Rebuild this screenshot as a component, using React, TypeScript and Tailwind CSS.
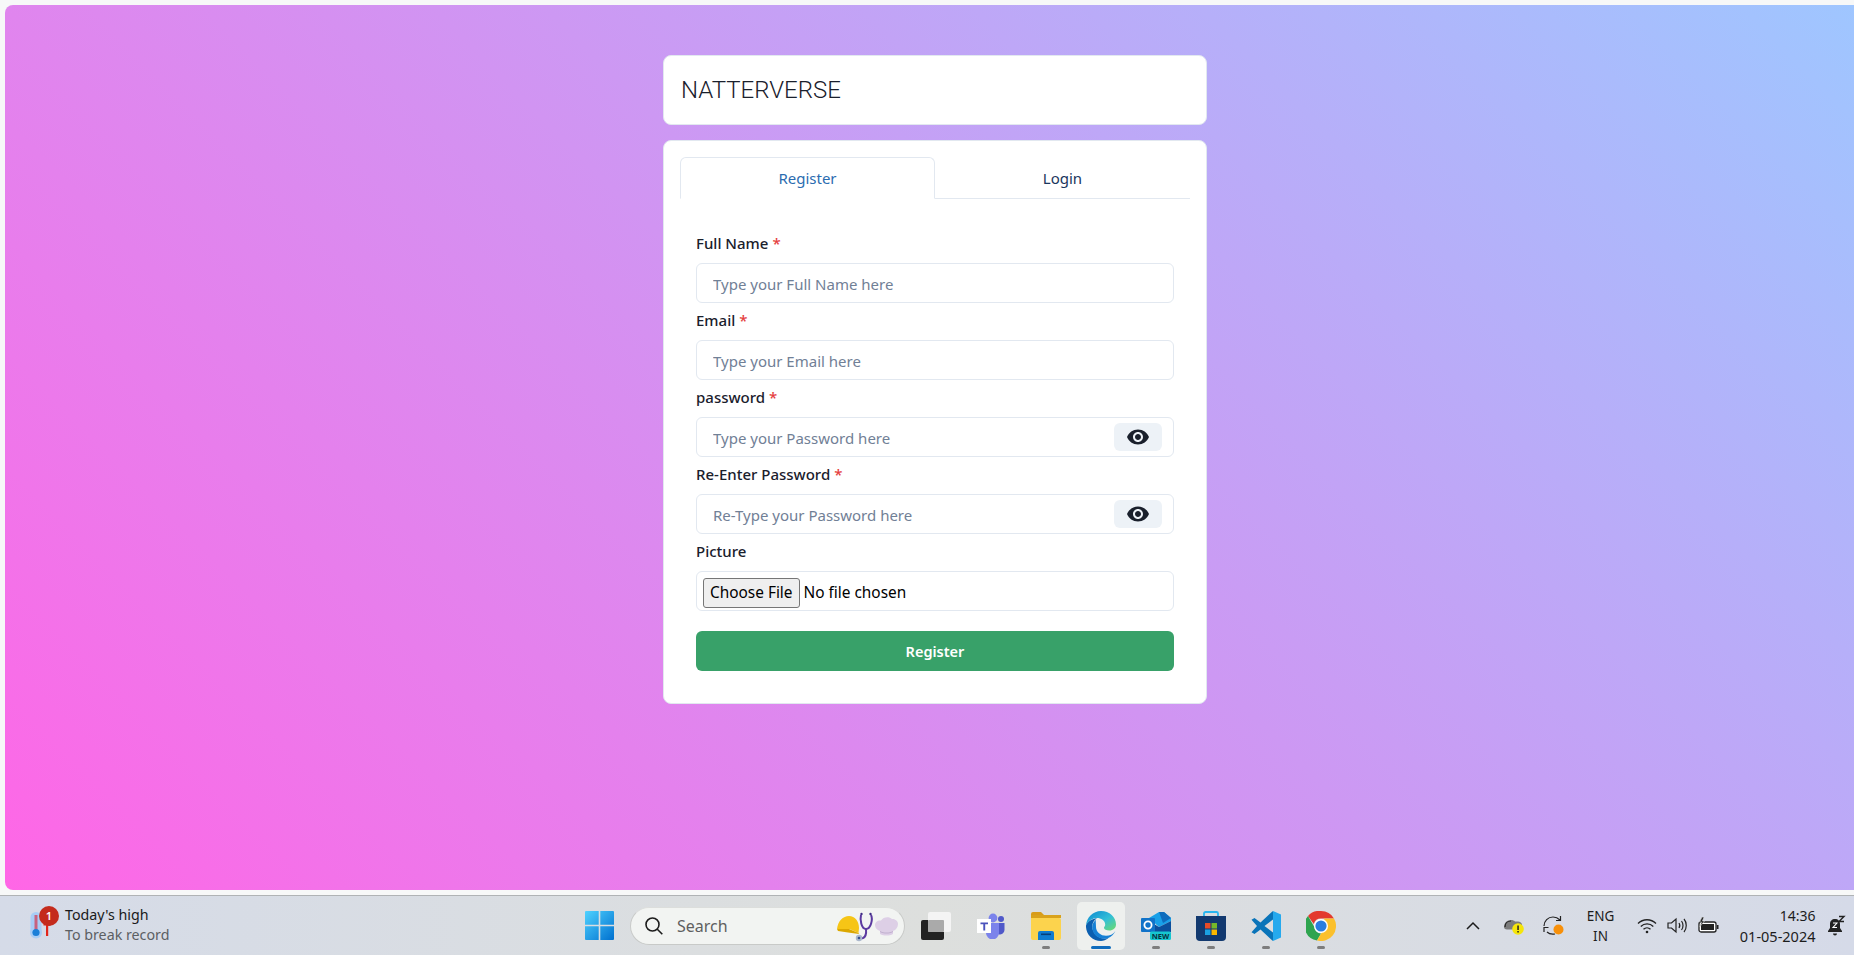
import React from "react";

const uiFont = { fontFamily: '"Noto Sans", sans-serif' };

function Field({
  label,
  required,
  placeholder,
  eye,
}: {
  label: string;
  required?: boolean;
  placeholder: string;
  eye?: boolean;
}) {
  return (
    <div className="w-full">
      <label className="block h-6 mb-2 text-[15px] leading-6 font-medium text-[#1a202c]">
        {label}
        {required && <span className="text-[#e53e3e] ml-1">*</span>}
      </label>
      <div className="relative h-10">
        <input
          placeholder={placeholder}
          className="w-full h-10 pl-4 pr-4 pt-[2px] text-[15px] border border-[#e2e8f0] rounded-md bg-white placeholder:text-[#718096] outline-none"
        />
        {eye && (
          <button className="absolute right-3 top-1.5 w-12 h-7 rounded-md bg-[#edf2f7] flex items-center justify-center">
            <svg width="24" height="24" viewBox="0 0 24 24" fill="#1a202c">
              <path d="M12 4.5C7 4.5 2.73 7.61 1 12c1.73 4.39 6 7.5 11 7.5s9.27-3.11 11-7.5c-1.73-4.39-6-7.5-11-7.5zM12 17c-2.76 0-5-2.24-5-5s2.24-5 5-5 5 2.24 5 5-2.24 5-5 5zm0-8c-1.66 0-3 1.34-3 3s1.34 3 3 3 3-1.34 3-3-1.34-3-3-3z" />
            </svg>
          </button>
        )}
      </div>
    </div>
  );
}

function WeatherIcon() {
  return (
    <div className="relative w-[30px] h-[36px]">
      <svg width="30" height="36" viewBox="0 0 30 36" className="absolute left-0 top-0">
        <rect x="4.500" y="4" width="11" height="24" rx="5.500" fill="#a9cdf5" />
        <circle cx="10" cy="24.500" r="6" fill="#a9cdf5" />
        <rect x="8.500" y="7" width="3" height="15" fill="#c7627f" />
        <circle cx="10" cy="24.500" r="3.600" fill="#1b7fd8" />
        <path d="M20 15h2.200v13H20zM17.500 15.500h7.200v2h-7.200z" fill="#e3261b" />
      </svg>
      <div className="absolute left-[13px] -top-[2px] w-5 h-5 rounded-full bg-[#c42b1c] text-white text-[11px] leading-5 text-center font-semibold">
        1
      </div>
    </div>
  );
}

function WindowsIcon() {
  return (
    <svg width="29" height="29" viewBox="0 0 29 29">
      <defs>
        <linearGradient id="win" x1="0" y1="0" x2="1" y2="1">
          <stop offset="0" stopColor="#4fd2ff" />
          <stop offset="1" stopColor="#0070cf" />
        </linearGradient>
      </defs>
      <path d="M1 0h12.7v13.7H0V1a1 1 0 0 1 1-1zM15.3 0H28a1 1 0 0 1 1 1v12.7H15.3zM0 15.3h13.7V29H1a1 1 0 0 1-1-1zM15.3 15.3H29V28a1 1 0 0 1-1 1H15.3z" fill="url(#win)" />
    </svg>
  );
}

function HeroIcons() {
  return (
    <svg width="62" height="32" viewBox="0 0 62 32">
      <path d="M0 19C1 11 6 6 12 6c6 0 10 5 10 12l-.5 5-9-4z" fill="#f6c516" />
      <path d="M0 19l12 0 9.500 4 .5 1-11-1.500L1 21z" fill="#dca800" />
      <path d="M24 5c-1 4 0 14 5 14s7-10 5-14" fill="none" stroke="#5b3aa0" strokeWidth="2" />
      <path d="M29 19c.5 5-.5 8-3 9-1.500.5-2.500 0-3-.5" fill="none" stroke="#5b3aa0" strokeWidth="2" />
      <circle cx="24.500" cy="4" r="1.200" fill="#3f2a85" />
      <circle cx="33.500" cy="4" r="1.200" fill="#3f2a85" />
      <circle cx="22" cy="28" r="3.200" fill="#aab7cc" />
      <circle cx="22" cy="28" r="1.300" fill="#35508f" />
      <path d="M43 21c-3-1-5-3-5-6 0-3 3-5 6-4.500C46 7 52 6 55 9c3-.5 6 2 6 5 0 3-2 6-5 7v3c-4 2-9 2-13 0z" fill="#ddcfe6" />
      <path d="M43 21c4 2 9 2 13 0v1c-4 2-9 2-13 0z" fill="#c0b0ce" />
    </svg>
  );
}

function TaskViewIcon() {
  return (
    <svg width="30" height="28" viewBox="0 0 30 28">
      <rect x="0" y="8" width="23" height="20" rx="2" fill="#222" />
      <rect x="7" y="0" width="23" height="20" rx="2" fill="#f4f4f4" />
      <rect x="7" y="8" width="16" height="12" rx="1" fill="#aaa" />
    </svg>
  );
}

function TeamsIcon() {
  return (
    <svg width="28" height="26" viewBox="0 0 28 26">
      <circle cx="16" cy="5" r="4.4" fill="#7b83eb" />
      <circle cx="24" cy="6" r="3" fill="#5059c9" />
      <path d="M21 10h6.5v7a4.5 4.5 0 0 1-6.5 4z" fill="#5059c9" />
      <path d="M9 10h13v10a6.5 6.5 0 0 1-13 0z" fill="#7b83eb" />
      <rect x="0" y="6" width="14" height="14" fill="#fff" />
      <path d="M3.5 9.5h7.5v1.8H8.2v6.2H6.3v-6.2H3.5z" fill="#4b53bc" />
    </svg>
  );
}

function ExplorerIcon() {
  return (
    <svg width="30" height="28" viewBox="0 0 30 28">
      <path d="M0 2a2 2 0 0 1 2-2h8l3 3h-13z" fill="#d89c1a" />
      <path d="M0 3h30v3H0z" fill="#d9a21c" />
      <path d="M0 6h28a2 2 0 0 1 2 2v18a2 2 0 0 1-2 2H2a2 2 0 0 1-2-2z" fill="#fcd34d" />
      <path d="M7 28v-7a2 2 0 0 1 2-2h12a2 2 0 0 1 2 2v7z" fill="#0f7cd1" />
      <rect x="10" y="21.5" width="10" height="1.6" fill="#063f7a" />
    </svg>
  );
}

function EdgeIcon() {
  return (
    <svg width="30" height="30" viewBox="0 0 30 30">
      <defs>
        <linearGradient id="edgeTop" x1="0" y1="0" x2="1" y2="1">
          <stop offset="0" stopColor="#0c87d0" />
          <stop offset="0.55" stopColor="#33bfd8" />
          <stop offset="1" stopColor="#6fdc6a" />
        </linearGradient>
      </defs>
      <path d="M15 0c8.500 0 15 6 15 13.500 0 3.600-3 6-6.600 6-3 0-5.400-1-5.400-2.700 0-1 1.200-1.500 1.200-3.300C19.200 9.500 15 7 11 7 6.500 7 2 10 0 14.500 .6 6.400 7 0 15 0z" fill="url(#edgeTop)" />
      <path d="M0 14.500C2 10 6.500 7.600 11 7.600c-3 1.400-4.700 4.400-4.700 7.900 0 6.500 5.700 12 12 12 1.500 0 3-.2 4.500-.8C19.800 28.800 17.500 30 15 30 6.500 30-.4 23 0 14.500z" fill="#0b5fb0" />
      <path d="M10 16c0 5 4.800 8.800 10 8.800 3.800 0 7.200-1.500 9.400-4.800-1.700 3.500-4.500 6-7.200 7-1.500.5-3 .8-4.500.8-6.300 0-11.500-5-11.500-11.500 0-3 1.600-6 3.800-7.600C9.500 10 10 13 10 16z" fill="#1680d5" />
    </svg>
  );
}

function OutlookIcon() {
  return (
    <svg width="30" height="28" viewBox="0 0 30 28">
      <path d="M8 6l10-6h5l7 6v3L18 15z" fill="#18a0e8" />
      <path d="M18 0h5l7 6-8 5z" fill="#0f6cbd" />
      <path d="M8 9l10 6 12-6v11H8z" fill="#0b4f9c" />
      <rect x="0" y="6" width="14" height="14" rx="1" fill="#1173c9" />
      <circle cx="7" cy="13" r="3.600" fill="none" stroke="#fff" strokeWidth="1.800" />
      <rect x="9" y="19.500" width="21" height="8.500" rx="1.500" fill="#16c6cf" />
      <text x="19.500" y="26.500" textAnchor="middle" fontSize="7.500" fontWeight="700" fill="#07323f" fontFamily="Noto Sans, sans-serif">
        NEW
      </text>
    </svg>
  );
}

function StoreIcon() {
  return (
    <svg width="30" height="30" viewBox="0 0 30 30">
      <path d="M8 5V2.500A1.500 1.500 0 0 1 9.500 1h11A1.500 1.500 0 0 1 22 2.500V5" fill="none" stroke="#28b6f0" strokeWidth="1.800" />
      <path d="M0 5h30v21a4 4 0 0 1-4 4H4a4 4 0 0 1-4-4z" fill="#12396f" />
      <rect x="9" y="12" width="5.500" height="5.500" fill="#e74b28" />
      <rect x="15.500" y="12" width="5.500" height="5.500" fill="#76b82a" />
      <rect x="9" y="18.500" width="5.500" height="5.500" fill="#1ba1e2" />
      <rect x="15.500" y="18.500" width="5.500" height="5.500" fill="#fbb800" />
    </svg>
  );
}

function CodeIcon() {
  return (
    <svg width="30" height="30" viewBox="0 0 30 30">
      <path d="M21.500 0.300L9.500 11.500 3.500 7 .500 8.800 6 15 .500 21.200 3.500 23l6-4.500 12 11.200 .5-.2V21.500L13.500 15 22 8.500V.5z" fill="#0a74b9" />
      <path d="M22 0l8 3.500v23L22 30z" fill="#25a9ee" />
    </svg>
  );
}

function ChromeIcon() {
  return (
    <svg width="30" height="30" viewBox="0 0 30 30">
      <path d="M15 0a15 15 0 0 1 13 7.500H15a7.500 7.500 0 0 0-7.200 5.400L2 4.900A15 15 0 0 1 15 0z" fill="#e3392e" />
      <path d="M2 4.900l6.500 11.300a7.500 7.500 0 0 0 6.500 6.300L11 29.500A15 15 0 0 1 2 4.900z" fill="#2ea44f" />
      <path d="M28 7.500A15 15 0 0 1 11 29.500l6.500-11.100a7.500 7.500 0 0 0 .1-10.900z" fill="#fbc02d" />
      <circle cx="15" cy="15" r="7" fill="#fff" />
      <circle cx="15" cy="15" r="5.600" fill="#2a7de1" />
    </svg>
  );
}

function Slot({ children, running, active }: { children: React.ReactNode; running?: boolean; active?: boolean }) {
  return (
    <div className="relative w-[55px] h-12 flex items-center justify-center">
      {active && <div className="absolute left-[3px] top-0 w-12 h-12 rounded-[5px] bg-[#eef0ee]" />}
      <div className="relative">{children}</div>
      {running && <div className="absolute left-[23.500px] bottom-[0.500px] w-2 h-[3px] rounded-full bg-[#7d7d7d]" />}
      {active && <div className="absolute left-[17.500px] bottom-[0.500px] w-5 h-[3px] rounded-full bg-[#0f6cbd]" />}
    </div>
  );
}

function TrayIcons() {
  return (
    <div className="flex items-center h-full text-[#1c1c1c]" style={uiFont}>
      <svg width="14" height="10" viewBox="0 0 14 10" fill="none" stroke="#1c1c1c" strokeWidth="1.500">
        <path d="M1 8l6-6 6 6" />
      </svg>
      <svg width="21" height="18" viewBox="0 0 21 18" className="ml-[23px]">
        <path d="M1 10c0-4 3-7 7-7 2 0 3 .5 4 1.500h3c2 0 4 1.500 4 3v5H4c-2 0-3-1-3-2.500z" fill="#7b7b7b" />
        <path d="M2 10c0-4 3-6 6-6" fill="none" stroke="#222" strokeWidth="1.200" />
        <circle cx="15" cy="12" r="5.800" fill="#f5e50a" />
        <rect x="14.300" y="8.500" width="1.500" height="4.500" fill="#222" />
        <rect x="14.300" y="14" width="1.500" height="1.500" fill="#222" />
      </svg>
      <svg width="21" height="21" viewBox="0 0 21 21" fill="none" stroke="#222" strokeWidth="1.200" className="ml-[19px]">
        <path d="M1 11C1 6 5 2 10 2c3 0 5 1 7 3" />
        <path d="M17.500 1v4.500H13" />
        <path d="M12 19c-3 .5-6 0-8-2" />
        <path d="M1 13h4.500v4.500" transform="rotate(-90 3 15)" />
        <circle cx="15.500" cy="14.500" r="5" fill="#f7900a" stroke="none" />
      </svg>
      <div className="w-[38px] ml-[18px] text-center text-[13.500px] leading-[20px]">
        ENG
        <br />
        IN
      </div>
      <svg width="20" height="16" viewBox="0 0 20 16" fill="none" stroke="#222" strokeWidth="1.300" className="ml-[17px]">
        <path d="M1 5.500c5-5 13-5 18 0M3.800 8.500c3.500-3.500 9-3.500 12.500 0M6.500 11.300c2-2 5-2 7 0" />
        <circle cx="10" cy="14" r="1.300" fill="#222" stroke="none" />
      </svg>
      <svg width="21" height="17" viewBox="0 0 21 17" fill="none" stroke="#222" strokeWidth="1.200" className="ml-[10px]">
        <path d="M1 6h3.500L9 2v13l-4.500-4H1z" />
        <path d="M12 6c1 1.500 1 3.500 0 5M14.500 4c2 2.500 2 6.500 0 9M17 2c3 3.500 3 9.500 0 13" />
      </svg>
      <svg width="21" height="18" viewBox="0 0 21 18" className="ml-[10px]">
        <rect x="1" y="5" width="17" height="10" rx="2" fill="#fff" stroke="#222" strokeWidth="1.300" />
        <rect x="3" y="7" width="13" height="6" fill="#222" />
        <rect x="18.800" y="8" width="1.700" height="4" fill="#222" />
        <path d="M4 0L1.500 5h2L2 9.500 6.500 4H4.500L6 0z" fill="#222" stroke="#dfe1e2" strokeWidth=".6" />
      </svg>
      <div className="w-[82px] ml-[15px] text-right leading-[20px]">
        <div className="text-[14px]">14:36</div>
        <div className="text-[14.500px]">01-05-2024</div>
      </div>
      <svg width="20" height="22" viewBox="0 0 20 22" className="ml-[10px]">
        <path d="M9 4c-3 0-5 2-5 5v4l-2 3v1h14v-1l-2-3V9c0-3-2-5-5-5z" fill="#222" />
        <path d="M7 18.500h4a2 2 0 0 1-4 0z" fill="#222" />
        <path d="M7 8h4l-4 4.500h4" fill="none" stroke="#fff" strokeWidth="1.100" />
        <path d="M13 1.500h5l-5 5h5" fill="none" stroke="#222" strokeWidth="1.400" />
      </svg>
    </div>
  );
}

function Taskbar() {
  return (
    <div
      className="h-[60px] flex items-center border-t border-[#b0b3b5] bg-gradient-to-r from-[#d5dbe8] via-[#dddfdd] to-[#d5dae8]"
      style={uiFont}
    >
      <div className="w-[585px] flex items-center pl-[26px] shrink-0">
        <WeatherIcon />
        <div className="ml-[9px] -mt-px text-[14.250px] leading-[20px] text-[#1a1a1a]">
          Today's high
          <div className="text-[#5c5f63]">To break record</div>
        </div>
      </div>
      <WindowsIcon />
      <div className="ml-[16px] w-[275px] h-[38px] rounded-full bg-[#f2f4f2] border border-[#c8cac8] border-t-[#dcdedc] flex items-center shrink-0">
        <svg width="20" height="20" viewBox="0 0 20 20" fill="none" stroke="#1c1c1c" strokeWidth="1.600" className="ml-[13px]">
          <circle cx="8.500" cy="8.500" r="6.500" />
          <path d="M13.300 13.300l5 5" />
        </svg>
        <span className="ml-[13px] text-[16px] text-[#5f5f5f]">Search</span>
        <div className="ml-auto mr-[5px] h-8">
          <HeroIcons />
        </div>
      </div>
      <div className="ml-[16px]">
        <TaskViewIcon />
      </div>
      <div className="flex items-center ml-[12.500px]">
        <Slot>
          <TeamsIcon />
        </Slot>
        <Slot running>
          <ExplorerIcon />
        </Slot>
        <Slot active>
          <EdgeIcon />
        </Slot>
        <Slot running>
          <OutlookIcon />
        </Slot>
        <Slot running>
          <StoreIcon />
        </Slot>
        <Slot running>
          <CodeIcon />
        </Slot>
        <Slot running>
          <ChromeIcon />
        </Slot>
      </div>
      <div className="ml-[117px] h-full">
        <TrayIcons />
      </div>
    </div>
  );
}

export default function App() {
  return (
    <div className="h-[955px] overflow-hidden bg-[#f7f8f8] flex flex-col" style={uiFont}>
      <div className="h-[885px] ml-[5px] mt-[5px] mb-[5px] rounded-l-lg bg-[linear-gradient(45deg,#ff66e6,#9fc6ff)] flex flex-col items-center pt-[50px] pl-[11px]">
        <div className="w-[544px] h-[70px] bg-white border border-[#e2e8f0] rounded-lg flex items-center px-[17px]">
          <span className="text-[24px] font-light text-[#1a202c]" style={{ fontFamily: "Roboto, sans-serif" }}>
            NATTERVERSE
          </span>
        </div>
        <div className="w-[544px] mt-[15px] bg-white border border-[#e2e8f0] rounded-lg p-4 text-[15px]">
          <div className="flex h-[42px] border-b border-[#e2e8f0]">
            <div className="w-1/2 h-[42px] pt-px border border-[#e2e8f0] border-b-white rounded-t-md text-[#2b6cb0] flex items-center justify-center">
              Register
            </div>
            <div className="w-1/2 pt-px flex items-center justify-center text-[#1a365d]">Login</div>
          </div>
          <div className="px-4 pt-8 pb-4 flex flex-col gap-[5px]">
            <Field label="Full Name" required placeholder="Type your Full Name here" />
            <Field label="Email" required placeholder="Type your Email here" />
            <Field label="password" required placeholder="Type your Password here" eye />
            <Field label="Re-Enter Password" required placeholder="Re-Type your Password here" eye />
            <div className="w-full">
              <label className="block h-6 mb-2 text-[15px] leading-6 font-medium text-[#1a202c]">Picture</label>
              <div className="h-10 border border-[#e2e8f0] rounded-md flex items-center pl-[6px] pt-1">
                <input
                  type="file"
                  className="text-[15.400px] text-black file:h-[30px] file:px-1.5 file:mr-1 file:bg-[#efefef] file:border file:border-[#767676] file:rounded-[3px] file:text-black"
                />
              </div>
            </div>
            <button className="mt-[15px] pt-px w-full h-10 rounded-md bg-[#38a169] text-white font-semibold text-[14.500px]">
              Register
            </button>
          </div>
        </div>
      </div>
      <Taskbar />
    </div>
  );
}
